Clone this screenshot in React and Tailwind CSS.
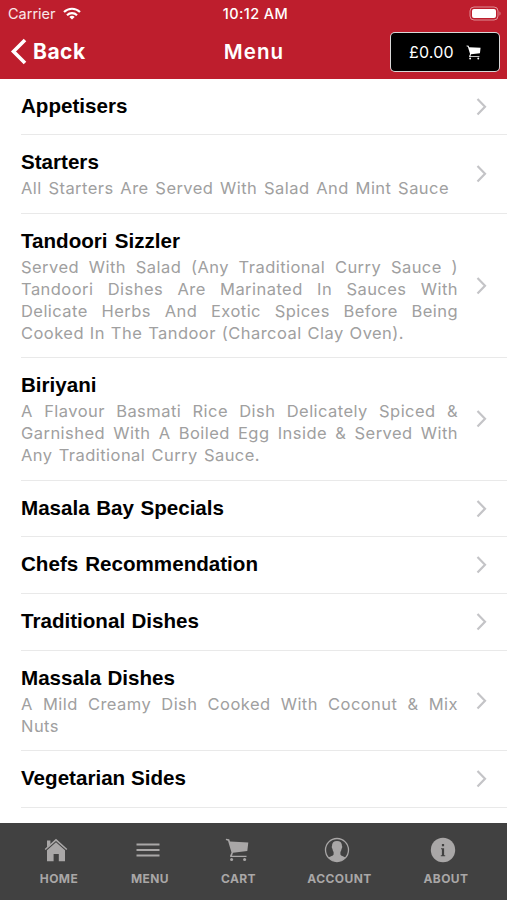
const sections = [
  { title: "Appetisers", tw: "w-[107px]", h: "h-[56px]", lines: [] },
  {
    title: "Starters", tw: "w-[78px]", h: "h-[79px]",
    lines: [["All Starters Are Served With Salad And Mint Sauce", "w-[428px]"]],
  },
  {
    title: "Tandoori Sizzler", tw: "w-[159px]", h: "h-[144px]",
    lines: [
      ["Served With Salad (Any Traditional Curry Sauce )", "w-[437px]"],
      ["Tandoori Dishes Are Marinated In Sauces With", "w-[437px]"],
      ["Delicate Herbs And Exotic Spices Before Being", "w-[437px]"],
      ["Cooked In The Tandoor (Charcoal Clay Oven).", "w-[383px]"],
    ],
  },
  {
    title: "Biriyani", tw: "w-[76px]", h: "h-[123px]",
    lines: [
      ["A Flavour Basmati Rice Dish Delicately Spiced &", "w-[437px]"],
      ["Garnished With A Boiled Egg Inside & Served With", "w-[437px]"],
      ["Any Traditional Curry Sauce.", "w-[239px]"],
    ],
  },
  { title: "Masala Bay Specials", tw: "w-[203px]", h: "h-[56px]", lines: [] },
  { title: "Chefs Recommendation", tw: "w-[237px]", h: "h-[57px]", lines: [] },
  { title: "Traditional Dishes", tw: "w-[178px]", h: "h-[57px]", lines: [] },
  {
    title: "Massala Dishes", tw: "w-[154px]", h: "h-[100px]",
    lines: [
      ["A Mild Creamy Dish Cooked With Coconut & Mix", "w-[437px]"],
      ["Nuts", "w-[41px]"],
    ],
  },
  { title: "Vegetarian Sides", tw: "w-[165px]", h: "h-[57px]", lines: [] },
];

function Cart({ className }) {
  return (
    <svg className={className} viewBox="0 0 24 24" fill="currentColor">
      <path d="M1 0.8 4.2 1.3 5 3.6 23.300 4.5 22.300 13 8 14.8 7 17.800H21.500v1.300H5.3L5 18 6.5 14.5 3 2.7.8 2z" />
      <circle cx="6.6" cy="21.6" r="1.5" />
      <circle cx="19.6" cy="21.6" r="1.5" />
    </svg>
  );
}

function Home() {
  return (
    <svg className="size-6" viewBox="0 0 24 24" fill="currentColor">
      <path d="M3 2.500h3.400v3.700L3 9.4z" />
      <path d="M12 .8 23.300 11l-1 1.100L12 3 1.700 12.100.7 11z" />
      <path d="m12 4.300 9 8V23.300h-6.200v-7.300H9.600v7.300H3v-11z" />
    </svg>
  );
}

function Lines() {
  return (
    <svg className="size-6" viewBox="0 0 24 24" stroke="currentColor" strokeWidth="1.9">
      <path d="M.5 6.500h23M.5 12h23M.5 17.500h23" />
    </svg>
  );
}

function Account() {
  return (
    <svg className="size-[26px]" viewBox="0 0 26 26">
      <circle cx="13" cy="13" r="11.5" fill="none" stroke="currentColor" strokeWidth="1.3" />
      <path fill="currentColor" d="M13 4c3.300 0 5.100 1.900 5 5 .4.300.3 2-.4 2.800-.3 1.500-.6 2.600-1.200 3.300v2.300c.5 1.400 3.100 1.700 5.200 3.100A11.800 11.800 0 0 1 13 24.600a11.800 11.800 0 0 1-8.600-4.100c2.100-1.400 4.700-1.700 5.200-3.100v-2.300c-.6-.7-.9-1.800-1.200-3.300-.7-.8-.8-2.500-.4-2.800-.1-3.100 1.700-5 5-5z" />
    </svg>
  );
}

function Info() {
  return (
    <svg className="size-[26px]" viewBox="0 0 26 26">
      <circle cx="13" cy="13" r="12.200" fill="currentColor" />
      <path fill="#414141" d="M11.900 7h2.200v2.200h-2.200zM11 11.200h3.100v7h1.100v1h-4.400v-1h1.100v-6H11z" />
    </svg>
  );
}

function Tab({ icon, label, pos, shift = "-translate-x-[3px]" }) {
  return (
    <div className={`flex shrink-0 flex-col items-center ${pos}`}>
      <div className={`flex h-[26px] items-center justify-center ${shift}`}>{icon}</div>
      <div className="mt-[9px] text-center text-[12px] leading-[14px] font-bold tracking-[0.42px] whitespace-nowrap">{label}</div>
    </div>
  );
}

export default function App() {
  return (
    <div className="flex h-[900px] w-[507px] flex-col overflow-hidden bg-white font-['Inter','Liberation_Sans',sans-serif]">
      <header className="h-[79px] shrink-0 bg-[#be1e2d] text-white">
        <div className="grid h-[27px] grid-cols-3 items-center pr-[6px] pl-[8px] text-[14.500px]">
          <div className="flex items-center gap-[7px] text-white/90">
            <span>Carrier</span>
            <svg className="h-[13px] w-[18px]" viewBox="0 0 18 13" fill="none" stroke="white" strokeWidth="2.200">
              <path d="M1 5a11.500 11.500 0 0 1 16 0M4 8.200a7.200 7.200 0 0 1 10 0" />
              <path d="M9 12.500 6.300 9.900a4 4 0 0 1 5.400 0z" fill="white" stroke="none" />
            </svg>
          </div>
          <div className="pl-[2px] text-center font-medium tracking-[0.4px] whitespace-nowrap">10:12 AM</div>
          <svg className="h-[15px] w-[32px] justify-self-end" viewBox="0 0 32 15">
            <rect x="1" y="1" width="28" height="13" rx="4" fill="none" stroke="white" strokeOpacity=".5" />
            <rect x="3" y="3" width="24" height="9" rx="2" fill="white" />
            <path d="M30.500 5.500c1.300.4 1.300 3.600 0 4z" fill="white" fillOpacity=".5" />
          </svg>
        </div>
        <div className="grid h-[50px] grid-cols-[199px_109px_199px] items-center">
          <div className="flex items-center gap-[6px] pl-[10px]">
            <svg className="h-[27px] w-[17px] -translate-y-[1px]" viewBox="0 0 17 27" fill="none" stroke="white" strokeWidth="3.600">
              <path d="M15 2 3.500 13.500 15 25" />
            </svg>
            <span className="text-[21px] font-bold tracking-[0.5px]">Back</span>
          </div>
          <div className="pl-[1px] text-center text-[20.500px] font-semibold tracking-[1.1px]">Menu</div>
          <div className="flex justify-end pr-[7px]">
            <div className="flex h-[40px] w-[110px] items-center rounded-[5px] border border-white/85 bg-black pl-[18px]">
              <span className="w-[46px] text-[16px] tracking-[0.2px]">£0.00</span>
              <Cart className="ml-[11px] size-[15px]" />
            </div>
          </div>
        </div>
      </header>
      <main className="min-h-0 flex-1 overflow-hidden">
        {sections.map((s) => (
          <section key={s.title} className={`ml-[21px] flex items-center justify-between border-b border-[#e9e9e9] pr-[20px] ${s.h}`}>
            <div className="flex self-stretch flex-col pt-[15px]">
              <h2 className={`h-[27px] font-['Liberation_Sans',sans-serif] text-[20.600px] leading-[24px] font-bold whitespace-nowrap text-black [text-align-last:justify] ${s.tw}`}>{s.title}</h2>
              {s.lines.map(([text, w]) => (
                <p key={text} className={`h-[22px] text-[16.500px] leading-[23px] font-normal tracking-[0.45px] whitespace-nowrap text-[#a0a0a0] [text-align-last:justify] ${w}`}>{text}</p>
              ))}
            </div>
            <svg className="h-[18px] w-[11px] shrink-0" viewBox="0 0 11 18" fill="none" stroke="#c4c4c7" strokeWidth="2.200">
              <path d="m1.500 1 7.500 7.700-7.500 7.700" />
            </svg>
          </section>
        ))}
      </main>
      <nav className="flex h-[77px] shrink-0 bg-[#414141] pt-[14px] text-[#a9a7a7]">
        <Tab icon={<Home />} label="HOME" pos="ml-[39px] w-[40px]" />
        <Tab icon={<Lines />} label="MENU" pos="ml-[51px] w-[40px]" shift="-translate-x-[2px]" />
        <Tab icon={<Cart className="size-6" />} label="CART" pos="ml-[51px] w-[35px]" shift="-translate-x-[2px]" />
        <Tab icon={<Account />} label="ACCOUNT" pos="ml-[51px] w-[65px]" />
        <Tab icon={<Info />} label="ABOUT" pos="ml-[51px] w-[46px]" />
      </nav>
    </div>
  );
}
